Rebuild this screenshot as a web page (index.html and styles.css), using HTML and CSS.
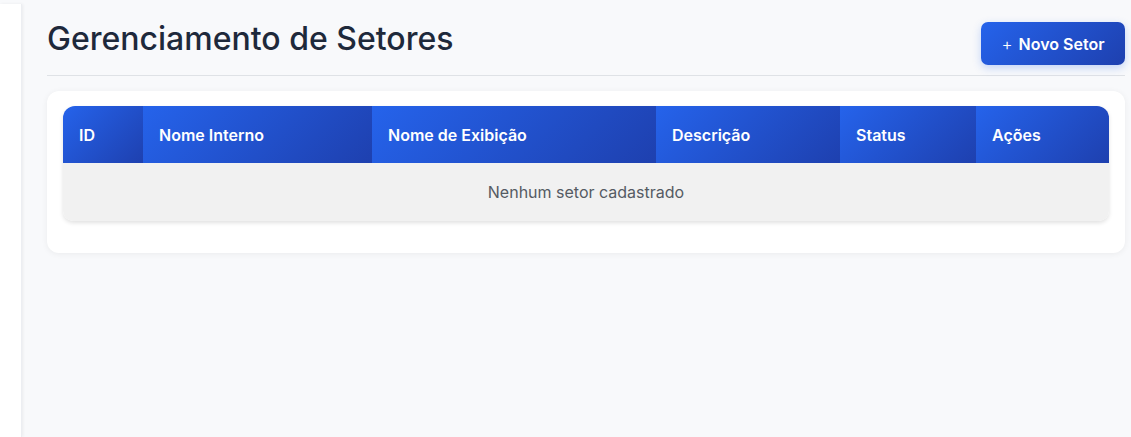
FILE: index.html
```html
<!DOCTYPE html>
<html lang="pt-BR">
<head>
<meta charset="utf-8">
<title>Gerenciamento de Setores</title>
<link rel="stylesheet" href="styles.css">
</head>
<body>
<div class="layout">
  <aside class="sidebar"></aside>
  <main class="main">
    <div class="page-header">
      <h1 class="title">Gerenciamento de Setores</h1>
      <button class="btn-primary"><span class="plus">+</span> Novo Setor</button>
    </div>
    <section class="card">
      <div class="table-wrap">
        <table class="table">
          <thead>
            <tr>
              <th class="c-id">ID</th>
              <th class="c-int">Nome Interno</th>
              <th class="c-exib">Nome de Exibição</th>
              <th class="c-desc">Descrição</th>
              <th class="c-status">Status</th>
              <th class="c-acoes">Ações</th>
            </tr>
          </thead>
          <tbody>
            <tr>
              <td class="empty" colspan="6">Nenhum setor cadastrado</td>
            </tr>
          </tbody>
        </table>
      </div>
    </section>
  </main>
</div>
</body>
</html>
```

FILE: styles.css
```css
* { box-sizing: border-box; }
html, body { margin: 0; padding: 0; }
body {
  background: #f8f9fb;
  font-family: Inter, "Noto Sans", sans-serif;
  color: #1e293b;
  height: 437px;
  overflow: hidden;
}
.layout {
  display: flex;
  height: 100%;
}
.sidebar {
  width: 22px;
  flex: none;
  margin-top: 4px;
  background: #ffffff;
  box-shadow: 1px 0 3px rgba(0, 0, 0, 0.06);
  border-right: 1px solid #eceef2;
}
.main {
  flex: 1;
  padding: 22px 6px 0 25px;
}
.page-header {
  display: flex;
  justify-content: space-between;
  align-items: flex-start;
  padding-bottom: 10px;
  border-bottom: 1px solid #dfe2e6;
}
.title {
  margin: 0;
  font-size: 32px;
  font-weight: 500;
  line-height: 34px;
  color: #1e293b;
  letter-spacing: 0;
}
.btn-primary {
  height: 43px;
  width: 144px;
  border: none;
  border-radius: 7px;
  background: linear-gradient(135deg, #2563eb, #1e40af);
  color: #fff;
  font-family: Inter, "Noto Sans", sans-serif;
  font-size: 16px;
  font-weight: 600;
  box-shadow: 0 3px 8px rgba(37, 99, 235, 0.25);
  display: flex;
  align-items: center;
  justify-content: center;
  gap: 6px;
  padding: 0;
}
.plus {
  font-weight: 300;
  font-size: 17px;
}
.card {
  margin-top: 15px;
  background: #ffffff;
  border-radius: 12px;
  padding: 15px 16px 32px;
  box-shadow: 0 1px 6px rgba(0, 0, 0, 0.06);
}
.table-wrap {
  border-radius: 12px 12px 10px 10px;
  overflow: hidden;
  box-shadow: 0 2px 4px rgba(0, 0, 0, 0.12);
}
.table {
  width: 100%;
  border-collapse: collapse;
  table-layout: fixed;
}
.table th {
  height: 57px;
  padding: 0 16px;
  text-align: left;
  color: #ffffff;
  font-size: 16px;
  font-weight: 600;
  background: linear-gradient(135deg, #2563eb, #1e40af);
}
.c-id { width: 80px; }
.c-int { width: 229px; }
.c-exib { width: 284px; }
.c-desc { width: 184px; }
.c-status { width: 136px; }
.c-acoes { width: 133px; }
.table td.empty {
  height: 58px;
  text-align: center;
  background: #f1f1f1;
  color: #555b63;
  font-size: 16px;
  font-weight: 400;
}
```
